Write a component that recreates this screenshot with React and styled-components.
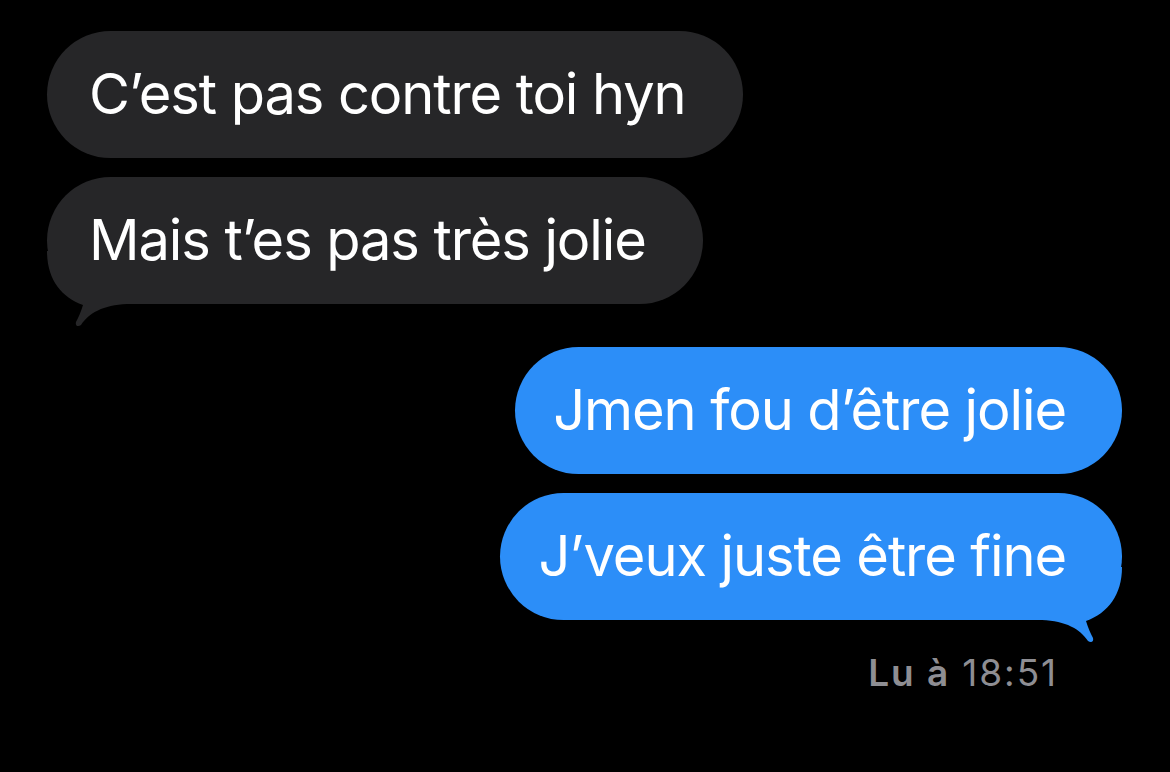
import React from "react";
import styled, { createGlobalStyle } from "styled-components";

const GlobalStyle = createGlobalStyle`
    html, body {
        margin: 0;
        background: #000;
    }
    body {
        font-family: Inter, "Noto Sans", "Liberation Sans", sans-serif;
        -webkit-font-smoothing: antialiased;
    }
`;

const messages = [
    { from: "them", text: "C’est pas contre toi hyn" },
    { from: "them", text: "Mais t’es pas très jolie", tail: true },
    { from: "me", text: "Jmen fou d’être jolie" },
    { from: "me", text: "J’veux juste être fine", tail: true },
];

const colors = {
    them: "#262628",
    me: "#2c8ef8",
};

// iMessage style tail, drawn for the left side and mirrored for the right
const Tail = ({ side }) => (
    <TailSvg side={side} width="80" height="76" viewBox="0 0 80 76">
        <path
            d="M0 0 C0 28 14 46 36 54 C34 61 31 67 29 71 C28 75 31 76 34 74 C42 62 56 54 80 53 L80 0 Z"
            fill={colors[side === "left" ? "them" : "me"]}
        />
    </TailSvg>
);

const Chat = () => {
    const groups = [];
    messages.forEach((m) => {
        const last = groups[groups.length - 1];
        if (last && last.from === m.from) last.items.push(m);
        else groups.push({ from: m.from, items: [m] });
    });

    return (
        <Thread>
            {groups.map((g, i) => (
                <Group key={i} mine={g.from === "me"}>
                    {g.items.map((m, j) => (
                        <Bubble key={j} mine={m.from === "me"}>
                            {m.tail && <Tail side={m.from === "me" ? "right" : "left"} />}
                            <Label>{m.text}</Label>
                        </Bubble>
                    ))}
                </Group>
            ))}
            <Receipt>
                <b>Lu à</b> 18:51
            </Receipt>
        </Thread>
    );
};

const App = () => (
    <>
        <GlobalStyle />
        <Chat />
    </>
);

const Thread = styled.div`
    display: flex;
    flex-direction: column;
    gap: 43px;
    padding: 31px 48px 0 47px;
`;

const Group = styled.div`
    display: flex;
    flex-direction: column;
    align-items: ${(p) => (p.mine ? "flex-end" : "flex-start")};
    gap: 19px;
`;

const Bubble = styled.div`
    position: relative;
    box-sizing: border-box;
    height: 127px;
    display: flex;
    align-items: center;
    padding: ${(p) => (p.mine ? "0 56px 2px 38px" : "0 57px 2px 42px")};
    border-radius: 64px;
    background: ${(p) => (p.mine ? colors.me : colors.them)};
    color: #fff;
    font-size: 56px;
    letter-spacing: -1.1px;
    white-space: nowrap;
`;

const Label = styled.span`
    position: relative;
`;

const TailSvg = styled.svg`
    position: absolute;
    bottom: -23px;
    ${(p) => (p.side === "left" ? "left: 0;" : "right: 0; transform: scaleX(-1);")}
`;

const Receipt = styled.div`
    align-self: flex-end;
    margin: -12px 64px 0 0;
    color: #8e8e93;
    font-size: 37px;
    letter-spacing: 1.9px;
    line-height: 44px;

    b {
        font-weight: 600;
    }
`;

export default App;
